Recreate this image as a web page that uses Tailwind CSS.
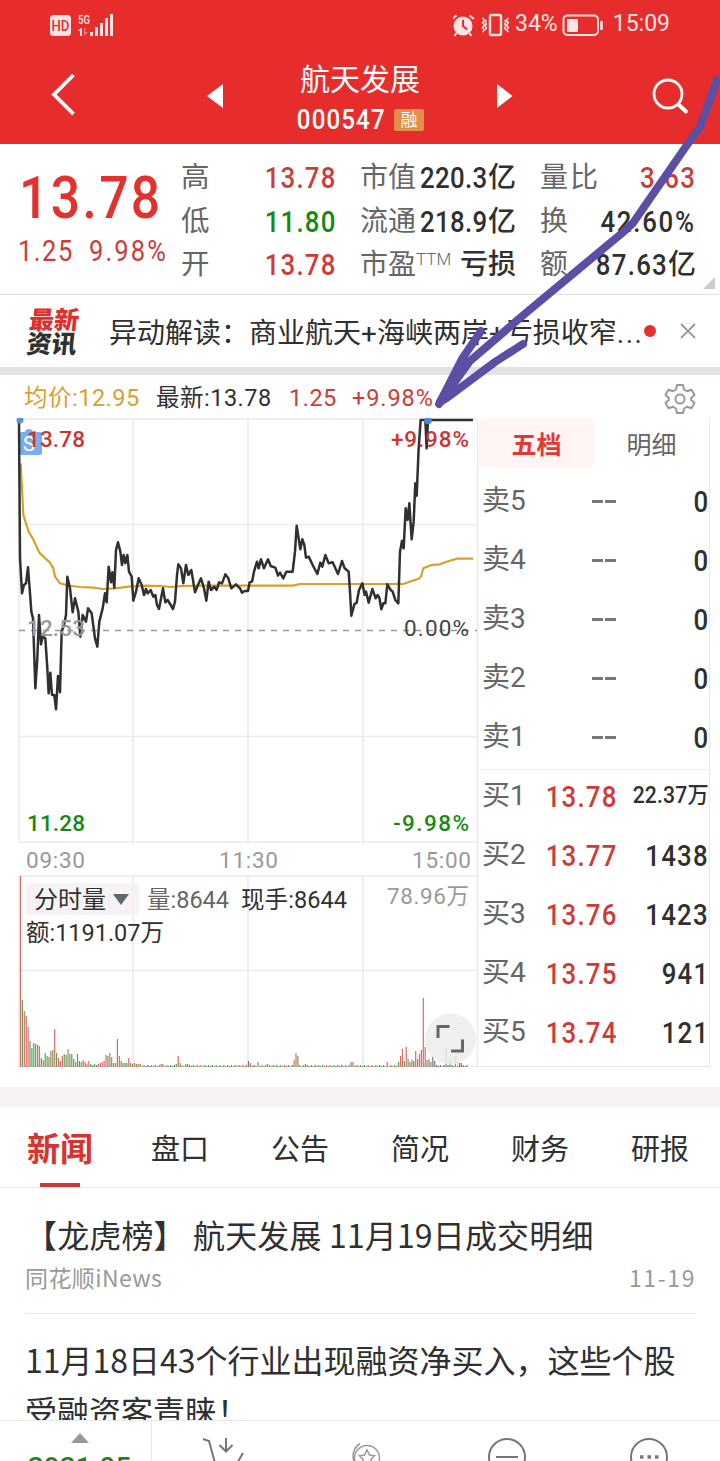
<!DOCTYPE html>
<html lang="zh-CN">
<head>
    <meta charset="UTF-8">
    <meta name="viewport" content="width=device-width, initial-scale=1.0">
    <title>航天发展 000547</title>
    <script src="https://cdn.jsdelivr.net/npm/@tailwindcss/browser@4"></script>
</head>
<body class="relative w-[720px] h-[1461px] overflow-hidden bg-white text-[#303030] font-['Roboto','Noto_Sans_CJK_SC',sans-serif] whitespace-nowrap">
    <!-- Header -->
    <header class="h-[144px] bg-[#e62d2b] text-white">
        <div class="h-12 pl-[50px] pr-[50px] pt-px flex items-center justify-between text-[#fde4e4]">
            <svg class="w-16 h-6" viewBox="50 12 64 24" fill="currentColor">
                <rect x="50" y="14" width="21" height="21" rx="3.500"/>
                <text x="51.500" y="29.500" font-size="14" font-weight="500" textLength="18" lengthAdjust="spacingAndGlyphs" fill="#e62d2b">HD</text>
                <text x="78" y="22.500" font-size="13" font-weight="500" textLength="12" lengthAdjust="spacingAndGlyphs">5G</text>
                <path d="M78 30l3-3h1v8h-2v-5z"/>
                <path d="M84 27h1.500v4l2.500 0-4 4z" opacity=".4"/>
                <path d="M90 31h3v4h-3zM95 26h3v9h-3zM100 22h3v13h-3zM105 17h3v18h-3zM110 13h3v22h-3z"/>
            </svg>
            <div class="flex items-center text-[23px]">
                <svg class="w-[60px] h-6 mr-[2px]" viewBox="452.500 12 60 24" fill="none" stroke="currentColor" stroke-width="2">
                    <circle cx="462.500" cy="25" r="9.500" fill="currentColor" stroke="none"/>
                    <path d="M451.500 18l4.500-3.500M473.500 18l-4.500-3.500M456 32l-2 3M469 32l2 3"/>
                    <path d="M462.500 19v6l4 3.500" stroke="#e62d2b"/>
                    <rect x="489.500" y="14" width="11" height="20" rx="1.500" stroke-width="2.400"/>
                    <path d="M482 17l2 2-2 2.500 2 2.500-2 2.500 2 2.500-2 2M486 19l-1.500 2 1.500 2-1.500 2 1.500 2-1.500 2M508 17l-2 2 2 2.500-2 2.500 2 2.500-2 2.500 2 2M504 19l1.500 2-1.500 2 1.500 2-1.500 2 1.500 2" stroke-width="1.400"/>
                </svg>
                <span>34%</span>
                <svg class="w-[42px] h-6 ml-[4px] mr-[9px]" viewBox="562 12 42 24" fill="none" stroke="currentColor">
                    <rect x="563.500" y="14.500" width="34.500" height="19.500" rx="4" stroke-width="2"/>
                    <rect x="567" y="18" width="11" height="13" rx="1" fill="currentColor" stroke="none"/>
                    <path d="M601.500 20v9" stroke-width="2.500"/>
                </svg>
                <span>15:09</span>
            </div>
        </div>
        <div class="h-24 pl-[50px] pr-[30px] flex items-center justify-between">
            <svg class="w-[180px] h-12" viewBox="50 72 180 48">
                <path d="M73.500 75L54 94.500 73.500 114" fill="none" stroke="#fff" stroke-width="3.800"/>
                <path d="M207 96l16-12v24z" fill="#fff"/>
            </svg>
            <div class="flex flex-col items-center w-[130px] pt-[8px]">
                <h1 class="text-[30px] leading-[40px]">航天发展</h1>
                <div class="flex items-center gap-[9px] leading-[40px]">
                    <span class="w-[89px] pl-px text-[28px] font-medium tracking-[1.300px] origin-left scale-x-[.86]">000547</span>
                    <span class="w-[30px] h-[22px] leading-[22px] rounded-xs bg-[#e28f48] text-center text-[17px]">融</span>
                </div>
            </div>
            <svg class="w-[200px] h-12" viewBox="490 72 200 48">
                <path d="M497 84v24l15.500-12z" fill="#fff"/>
                <circle cx="668" cy="94" r="14" fill="none" stroke="#fff" stroke-width="2.800"/>
                <path d="M678.500 104.500l7.500 7" stroke="#fff" stroke-width="4" stroke-linecap="round"/>
            </svg>
        </div>
    </header>

    <!-- Quote summary -->
    <section class="relative h-[151px] border-b border-[#e2e2e2] pt-[12px] pr-6 flex">
        <div class="w-[181px] pt-[10px] text-[#e3322e] font-medium">
            <div class="pl-[22px] text-[60px] leading-[64px] tracking-[2.800px] origin-left scale-x-[.86]">13.78</div>
            <div class="pl-[18px] pt-[2px] flex gap-[18px] text-[29px] leading-[38px] text-[#cc3c3a]">
                <span class="w-[53px] font-normal tracking-[1.700px] origin-left scale-x-[.88]">1.25</span>
                <span class="w-[80px] font-normal tracking-[2.400px] origin-left scale-x-[.88]">9.98%</span>
            </div>
        </div>
        <div class="w-[156px] mr-[23px] text-[28.500px] leading-[43.500px]">
            <div class="flex justify-between"><span class="text-[#666]">高</span><b class="font-medium text-[30px] tracking-[1.400px] origin-right scale-x-[.86] text-[#cc3c3a]">13.78</b></div>
            <div class="flex justify-between"><span class="text-[#666]">低</span><b class="font-medium text-[30px] tracking-[1.400px] origin-right scale-x-[.86] text-[#148a14]">11.80</b></div>
            <div class="flex justify-between"><span class="text-[#666]">开</span><b class="font-medium text-[30px] tracking-[1.400px] origin-right scale-x-[.86] text-[#cc3c3a]">13.78</b></div>
        </div>
        <div class="w-[156px] mr-[24px] text-[28px] leading-[43.500px]">
            <div class="flex justify-between"><span class="text-[#666]">市值</span><b class="flex -ml-4"><span class="font-medium text-[30px] tracking-[0.400px] origin-right scale-x-[.86]">220.3</span><span class="font-medium">亿</span></b></div>
            <div class="flex justify-between"><span class="text-[#666]">流通</span><b class="flex -ml-4"><span class="font-medium text-[30px] tracking-[0.400px] origin-right scale-x-[.86]">218.9</span><span class="font-medium">亿</span></b></div>
            <div class="flex justify-between"><span class="text-[#666]">市盈<sup class="text-[17px] font-light top-[-9px]">TTM</sup></span><b class="font-medium">亏损</b></div>
        </div>
        <div class="w-[156px] text-[28px] leading-[43.500px]">
            <div class="flex justify-between"><span class="text-[#666] tracking-[2px]">量比</span><b class="font-medium text-[30px] tracking-[1.400px] origin-right scale-x-[.86] text-[#cc3c3a]">3.63</b></div>
            <div class="flex justify-between"><span class="text-[#666]">换</span><b class="font-medium text-[30px] tracking-[2px] origin-right scale-x-[.86]">42.60%</b></div>
            <div class="flex justify-between"><span class="text-[#666]">额</span><b class="flex"><span class="font-medium text-[30px] tracking-[1.500px] origin-right scale-x-[.86]">87.63</span><span class="font-medium">亿</span></b></div>
        </div>
        <svg class="absolute right-[5px] bottom-[5px] w-3 h-3" viewBox="0 0 12 12"><path d="M12 0v12H0z" fill="#ccc"/></svg>
    </section>

    <!-- News ticker -->
    <section class="h-[80px] border-b-8 border-[#e4e1e5] pl-[28px] pr-6 flex items-center">
        <div class="w-[81px] text-[25px] leading-[24px] font-black -skew-x-6 pt-[3px]">
            <div class="text-[#d8332f]">最新</div>
            <div>资讯</div>
        </div>
        <p class="text-[28px] w-[535px] pt-[6px]">异动解读：商业航天+海峡两岸+亏损收窄<span class="tracking-[1.500px]">...</span></p>
        <span class="size-3 rounded-full bg-[#e3322e]"></span>
        <svg class="ml-auto size-4" viewBox="0 0 16 16" stroke="#999" stroke-width="1.800"><path d="M1 1l14 14M15 1L1 15"/></svg>
    </section>

    <!-- Chart caption -->
    <div class="h-[43px] pl-6 pr-6 pt-[4px] flex items-center text-[23.500px] tracking-[0.500px]">
        <span class="w-[132px] text-[#d9a02f]">均价:12.95</span>
        <span class="w-[133px]">最新:13.78</span>
        <span class="w-[63px] text-[#cc3c3a]">1.25</span>
        <span class="text-[#cc3c3a] tracking-[0.900px]">+9.98%</span>
        <svg class="ml-auto size-8" viewBox="0 0 32 32" fill="none" stroke="#999" stroke-width="2" stroke-linejoin="round">
            <path d="M13 2h6l1 4.500 3 1.700 4.500-1.500 3 5.200-3.300 3v2.200l3.300 3-3 5.200-4.500-1.500-3 1.700-1 4.500h-6l-1-4.500-3-1.700-4.500 1.500-3-5.200 3.300-3v-2.200l-3.300-3 3-5.200L9 8.200l3-1.700z"/>
            <circle cx="16" cy="16" r="4.500"/>
        </svg>
    </div>

    <main class="h-[649px] flex">
        <!-- Intraday chart -->
        <svg class="w-[479px] h-[649px] shrink-0" viewBox="0 418 479 649" font-size="22.500" font-weight="500">
            <g stroke="#eaeaea" stroke-width="1.500" fill="none">
                <path d="M19 419H477M19 524.500H477M19 736.500H477M19 842H477M19 876H477M19 970.500H477M19 1066.500H477"/>
                <path d="M19 419V842M133 419V842M248 419V842M363 419V842M477.500 419V1067M19 876V1067M133 876V1067M248 876V1067M363 876V1067"/>
            </g>
            <path d="M19 630.500H477" stroke="#999" stroke-width="1.500" stroke-dasharray="6 6"/>

            <rect x="20" y="432" width="22" height="23" rx="2" fill="#78adf0"/>
            <circle cx="29" cy="433" r="4" fill="#78adf0"/>
            <text x="23" y="451" fill="#fff" font-weight="400" font-size="20">S</text>

            <g fill="none" stroke-linejoin="round" transform="translate(0 375) scale(.33333)">
                <polyline stroke="#d6a02c" stroke-width="6.500" points="62,265 66,340 70,420 86,470 98,490 118,533 150,563 160,580 165,605 180,625 205,632 240,636 280,638 310,642 345,640 385,635 440,632 480,633 515,636 545,633 610,632 878,632 900,627 1210,627 1235,618 1255,612 1263,605 1270,580 1295,570 1320,568 1340,560 1370,551 1419,551"/>
                <polyline stroke="#303030" stroke-width="7.500" points="57,135 60,550 66,655 72,630 78,625 84,577 90,655 94,710 99,730 106,940 112,850 117,720 123,808 128,785 136,790 142,880 146,955 151,893 156,960 163,960 168,1003 174,903 180,952 185,770 192,750 198,720 202,605 210,640 218,712 225,670 235,710 241,785 248,720 258,740 264,700 275,715 285,790 292,815 298,740 308,700 315,655 320,682 326,575 333,622 337,592 343,638 348,525 354,502 361,530 366,570 371,540 376,565 382,540 387,590 395,605 400,677 408,650 416,610 425,630 432,660 438,642 443,655 452,645 460,665 466,660 471,690 477,702 489,640 496,682 503,675 512,690 519,702 525,680 531,600 535,568 543,580 550,625 558,570 565,600 574,585 585,652 594,630 603,610 612,640 619,677 626,620 633,645 643,635 650,645 657,622 666,625 676,598 685,610 694,640 708,628 720,640 726,653 734,648 744,648 749,622 756,620 762,590 771,560 776,580 783,553 792,580 804,553 812,573 826,578 834,602 840,593 850,610 859,590 878,590 885,530 890,452 896,490 901,523 907,493 913,510 918,548 926,545 938,570 952,597 961,563 967,575 976,540 986,565 998,562 1014,597 1026,558 1034,580 1046,590 1050,650 1054,722 1063,688 1070,683 1077,645 1087,625 1094,660 1098,650 1106,683 1117,642 1127,670 1133,660 1138,668 1144,703 1150,685 1156,685 1162,628 1172,645 1178,650 1186,675 1195,685 1200,530 1206,497 1211,520 1217,400 1223,435 1228,385 1235,493 1241,440 1246,325 1250,362 1256,220 1262,135 1276,135 1280,220 1284,135 1419,135"/>
            </g>
            <circle cx="20" cy="420" r="3.500" fill="#5b93d8"/>
            <circle cx="428" cy="420.500" r="3.800" fill="#4a8ad4"/>

            <text x="27" y="447" textLength="58" fill="#cc3333">13.78</text>
            <text x="391" y="447" textLength="78" fill="#cc3333">+9.98%</text>
            <text x="27" y="636" textLength="58" fill="#999">12.53</text>
            <text x="404" y="636" textLength="65" fill="#444" font-weight="400">0.00%</text>
            <text x="27" y="831" textLength="58" fill="#148a14">11.28</text>
            <text x="393" y="831" textLength="76" fill="#148a14">-9.98%</text>
            <g fill="#999" font-weight="400">
                <text x="26" y="868" textLength="59">09:30</text>
                <text x="219" y="868" textLength="59">11:30</text>
                <text x="412" y="868" textLength="59">15:00</text>
                <text x="387" y="904" textLength="82">78.96万</text>
            </g>

            <!-- Volume -->
            <g id="volume"></g>
            <rect x="26" y="883" width="113" height="32" rx="3" fill="#f4f0f4" fill-opacity=".85"/>
            <text x="34" y="908" font-size="24" textLength="72" font-weight="400" fill="#303030">分时量</text>
            <path d="M113 894h16l-8 11z" fill="#666"/>
            <text x="147" y="908" textLength="82" font-size="23.500" font-weight="400" fill="#666">量:8644</text>
            <text x="241" y="908" textLength="106" font-size="23.500" font-weight="400" fill="#303030">现手:8644</text>
            <text x="26" y="941" textLength="138" font-size="23.500" font-weight="400" fill="#303030">额:1191.07万</text>
            <circle cx="450.500" cy="1039" r="25.500" fill="#ececec" fill-opacity=".85"/>
            <path d="M438 1038v-11.500h11.500M451 1051h11.500v-11.500" fill="none" stroke="#666" stroke-width="3"/>
        </svg>

        <!-- Order book -->
        <aside class="w-[231px] border-r border-b border-[#e8e8e8] text-[28px] text-[#666]">
            <div class="flex h-[50px] leading-[55px] text-center text-[25px]">
                <div class="w-[115px] rounded-md bg-[#fff5f5] text-[#e03a33] font-bold">五档</div>
                <div class="w-[115px]">明细</div>
            </div>
            <div id="asks" class="pt-[4px] h-[302px] border-b border-[#efefef]"></div>
            <div id="bids" class="-mt-[3px]"></div>
        </aside>
    </main>
    <div class="h-5 mt-5 bg-[#f6f2f6]"></div>

    <!-- Tabs -->
    <nav class="h-[81px] border-b border-[#e8e8e8] grid grid-cols-6 text-center text-[29px] leading-[86px]">
        <a class="flex flex-col items-center text-[33px] font-bold text-[#d8332f]"><span class="h-[76px]">新闻</span><i class="w-10 h-1 bg-[#c93a3a]"></i></a>
        <a>盘口</a>
        <a>公告</a>
        <a>简况</a>
        <a>财务</a>
        <a>研报</a>
    </nav>

    <!-- News list -->
    <section class="pl-[25px] pr-6 h-[232px] overflow-hidden font-['Noto_Sans_CJK_SC',sans-serif]">
        <article class="h-[126px] border-b border-[#e8e8e8] pt-[21px]">
            <h2 class="text-[32px] leading-[50px] tracking-[0.150px]">【龙虎榜】 航天发展 11月19日成交明细</h2>
            <div class="pt-px flex justify-between text-[23px] leading-[34px] text-[#999]"><span class="tracking-[0.400px]">同花顺iNews</span><span class="tracking-[1.600px]">11-19</span></div>
        </article>
        <article class="pt-[20px] text-[32px] leading-[51px]">
            <h2>11月18日43个行业出现融资净买入，这些个股<br>受融资客青睐！</h2>
        </article>
    </section>

    <!-- Bottom bar -->
    <footer class="h-[41px] border-t border-[#e8e8e8] flex overflow-hidden">
        <div class="w-[152px] border-r border-[#e8e8e8] flex flex-col items-center pt-3 pl-2">
            <svg class="w-[18px] h-[10px] shrink-0" viewBox="0 0 18 10"><path d="M9 0l9 10H0z" fill="#999"/></svg>
            <span class="pt-[9px] text-[28px] leading-[32px] font-medium text-[#148a14]">3931.05</span>
        </div>
        <svg class="w-[568px] h-10" viewBox="152 1421 568 40" fill="none" stroke="#777" stroke-width="2">
            <path d="M203 1439l6 2 6 22M243 1453l-7 12M226 1438v13M219.500 1445l6.500 6.500 6.500-6.500"/>
            <g stroke="#999" stroke-width="1.500">
                <circle cx="367" cy="1458" r="12.500"/>
                <path d="M360 1443.500a15 15 0 0 0-5 20M367 1450l2.500 5 5 .8-3.600 3.800.9 5.400-4.800-2.500-4.800 2.500.9-5.400-3.600-3.800 5-.8z"/>
            </g>
            <circle cx="507" cy="1457" r="18"/>
            <path d="M496 1457h22"/>
            <circle cx="649" cy="1457" r="18"/>
            <path d="M640 1457h3.500M647.500 1457h3.500M655 1457h3.500" stroke-width="3.500"/>
        </svg>
    </footer>

    <!-- Hand-drawn arrow -->
    <svg class="absolute inset-0 w-[720px] h-[420px] pointer-events-none" viewBox="0 0 720 420" fill="none" stroke="#5b4fa5" stroke-width="8" stroke-linecap="round" stroke-linejoin="round">
        <path d="M717 80l-5 14-12 33-13 18-54 78-12 11-94 78-57 49-31 43 23-45 19-28"/>
        <path d="M523 344l-28 18-47 35-8 5 20-34"/>
    </svg>

    <script>
        // Order book rows
        const asks = [['卖5'], ['卖4'], ['卖3'], ['卖2'], ['卖1']];
        const bids = [['买1', '13.78', '22.37万'], ['买2', '13.77', '1438'], ['买3', '13.76', '1423'], ['买4', '13.75', '941'], ['买5', '13.74', '121']];

        function row([label, price, amount]) {
            const priceCell = price
                ? `<span class="w-[82px] flex justify-end text-[30px] font-medium text-[#cc3c3a]"><b class="font-medium tracking-[1.400px] origin-right scale-x-[.86]">${price}</b></span>`
                : `<span class="w-[81px] flex justify-end gap-[2px] pr-px"><i class="w-[11px] h-[3px] bg-[#777]"></i><i class="w-[11px] h-[3px] bg-[#777]"></i></span>`;
            const size = amount === '22.37万' ? 'text-[23px] tracking-[0.2px] scale-x-[.92]' : 'text-[30px] tracking-[1.4px] scale-x-[.86]';
            return `<div class="flex items-center h-[58px] mb-px pl-[3px]">
                <span class="w-[54px]">${label}</span>${priceCell}
                <span class="ml-auto origin-right font-medium text-[#303030] ${size}">${amount || '0'}</span>
            </div>`;
        }
        document.getElementById('asks').innerHTML = asks.map(row).join('');
        document.getElementById('bids').innerHTML = bids.map(row).join('');

        // Volume bars, one per minute: height + colour (r up, g down, k flat)
        const bars = ('191r 67g 56r 51r 40r 26g 19g 24g 23g 22r 21r 9g 7r 14g 11g 10g 16r 17g 38r 14g 9r 6r 11r 13g 12g 18r 13g 13g 8g 5r 13g 6g 5g 7r 5r 3r 6r 3g 2k 3g 2k 3r 4r 5r 6r 12r 11g 14r 10g 4g 4r 28r 11r 6g 4r 4g 4g 9r 4g 3r 4g 3r 3r 3g').split(' ');
        const peaks = {74: '3r', 75: '3r', 82: '3g', 83: '11r', 84: '4g', 87: '3g', 88: '3r', 120: '6k', 121: '4r', 125: '5r', 130: '3r', 144: '7r', 145: '14r', 146: '11g', 150: '3g', 174: '5g', 175: '5r', 193: '5r', 199: '5g', 200: '11r', 201: '18r', 202: '6g', 203: '20r', 204: '8g', 205: '5r', 206: '7g', 207: '6k', 208: '16r', 209: '8g', 210: '13r', 211: '17r', 212: '69r', 213: '20r', 214: '7g', 215: '8r', 216: '5g', 217: '11k', 218: '6k', 224: '19g', 226: '8g', 229: '11r', 231: '4k', 232: '4k'};
        for (let i = bars.length; i < 236; i++) bars.push(peaks[i] || (1 + i % 2) + (i > 218 ? 'k' : 'grgk'[i * 7 % 11 % 4]));
        const colours = {r: '#d96a68', g: '#5aa552', k: '#777'};
        document.getElementById('volume').innerHTML = bars.map((bar, i) => {
            const height = parseInt(bar);
            return `<rect x="${19.9 + i * 1.9}" y="${1067 - height}" width="1.2" height="${height}" fill="${colours[bar.at(-1)]}"/>`;
        }).join('');
    </script>
</body>
</html>
